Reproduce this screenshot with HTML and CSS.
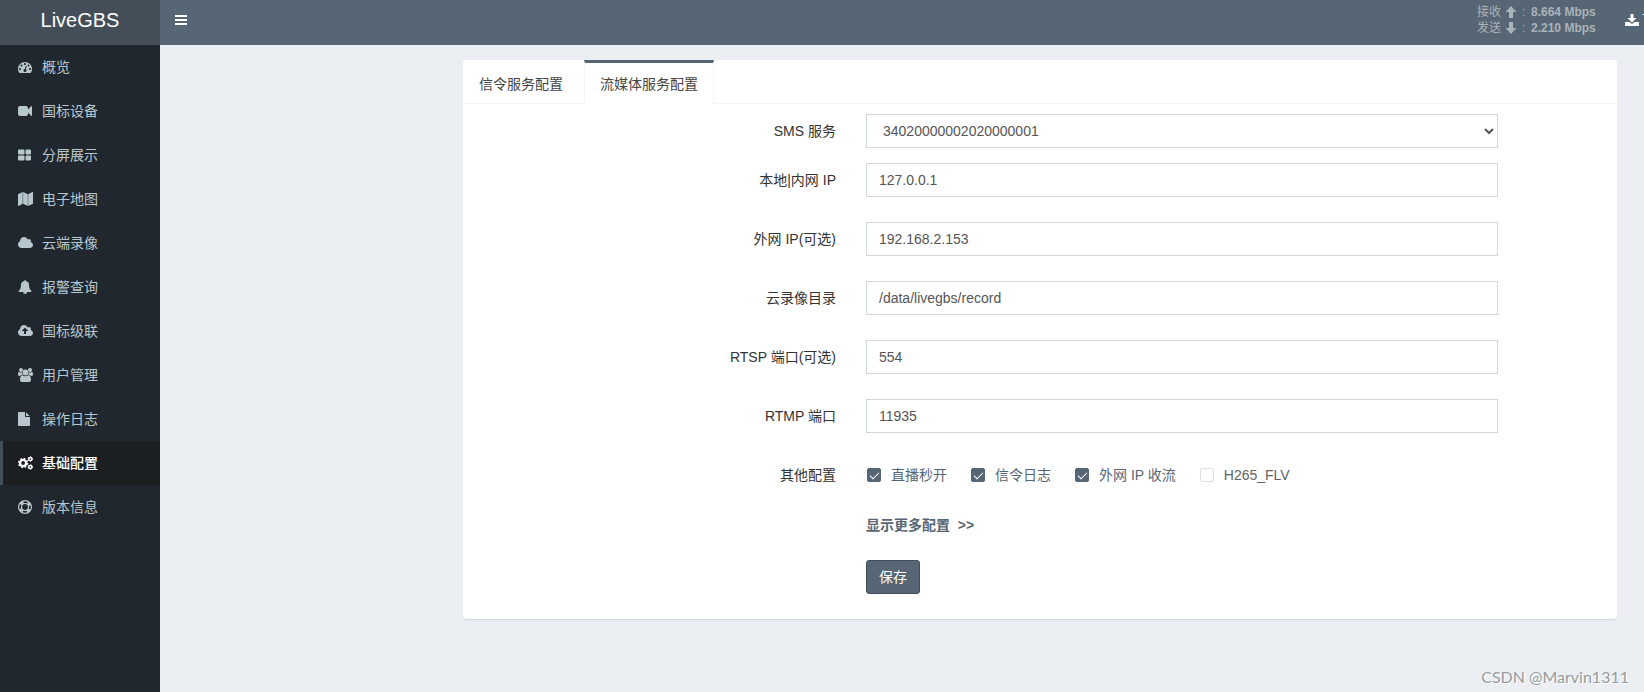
FILE: index.html
```html
<!DOCTYPE html>
<html lang="zh-CN">
<head>
<meta charset="utf-8">
<title>LiveGBS</title>
<link rel="stylesheet" href="styles.css">
</head>
<body>
<div class="app">
  <header class="header">
    <a class="logo" href="#">LiveGBS</a>
    <nav class="navbar">
      <button class="toggle" type="button" aria-label="菜单">
        <svg viewBox="0 0 12 14" width="12" height="14"><path d="M0 2h12v2H0zM0 6h12v2H0zM0 10h12v2H0z"/></svg>
      </button>
      <div class="nav-right">
        <div class="traffic">
          <div class="rate"><span>接收</span><svg viewBox="0 0 12 12" width="12" height="12"><path d="M6 0l5.500 6H8v6H4V6H.5z"/></svg><span class="colon">:</span><b>8.664 Mbps</b></div>
          <div class="rate"><span>发送</span><svg viewBox="0 0 12 12" width="12" height="12"><path d="M6 12l5.500-6H8V0H4v6H.5z"/></svg><span class="colon">:</span><b>2.210 Mbps</b></div>
        </div>
        <a class="download" href="#"><svg viewBox="0 0 14 14" width="14" height="14"><path d="M5.500 1h3v4h3L7 9.500 2.500 5h3zM0 9h4.500L7 11l2.500-2H14v4H0z"/></svg>下载</a>
      </div>
    </nav>
  </header>
  <div class="body">
    <aside class="sidebar">
      <a class="item" href="#"><svg viewBox="0 0 1792 1792" width="14" height="14"><path d="M384 1152q0-53-37.5-90.5t-90.5-37.5-90.5 37.5-37.5 90.5 37.5 90.5 90.5 37.5 90.5-37.5 37.5-90.5zm192-448q0-53-37.5-90.5t-90.5-37.5-90.5 37.5-37.5 90.5 37.5 90.5 90.5 37.5 90.5-37.5 37.5-90.5zm428 481l101-382q6-26-7.5-48.5t-38.5-29.5-48 6.5-30 39.5l-101 382q-60 5-107 43.5t-63 98.5q-20 77 20 146t117 89 146-20 89-117q16-60-6-117t-72-91zm660-33q0-53-37.5-90.5t-90.5-37.5-90.5 37.5-37.5 90.5 37.5 90.5 90.5 37.5 90.5-37.5 37.5-90.5zm-640-640q0-53-37.5-90.5t-90.5-37.5-90.5 37.5-37.5 90.5 37.5 90.5 90.5 37.5 90.5-37.5 37.5-90.5zm448 192q0-53-37.5-90.5t-90.5-37.5-90.5 37.5-37.5 90.5 37.5 90.5 90.5 37.5 90.5-37.5 37.5-90.5zm320 448q0 261-141 483-19 29-54 29h-1402q-35 0-54-29-141-221-141-483 0-182 71-348t191-286 286-191 348-71 348 71 286 191 191 286 71 348z"/></svg><span>概览</span></a>
      <a class="item" href="#"><svg viewBox="0 0 14 14" width="14" height="14"><path d="M2 2h6q2 0 2 2v1.500L13.200 2.200Q14 1.600 14 2.500v9q0 .9-.8.3L10 8.500V10q0 2-2 2H2q-2 0-2-2V4q0-2 2-2z"/></svg><span>国标设备</span></a>
      <a class="item" href="#"><svg viewBox="0 0 14 14" width="14" height="14"><path d="M1 1.500h4.500q1 0 1 1v3q0 1-1 1H1q-1 0-1-1v-3q0-1 1-1zm7.500 0H12q1 0 1 1v3q0 1-1 1H8.500q-1 0-1-1v-3q0-1 1-1zM1 7.500h4.500q1 0 1 1v3q0 1-1 1H1q-1 0-1-1v-3q0-1 1-1zm7.500 0H12q1 0 1 1v3q0 1-1 1H8.500q-1 0-1-1v-3q0-1 1-1z"/></svg><span>分屏展示</span></a>
      <a class="item" href="#"><svg viewBox="0 0 15 14" width="15" height="14"><path d="M0 2.200L4.700 0v11.800L.6 13.900Q0 14.100 0 13.500zM5.100 0l4.700 2.200V14L5.100 11.800zM10.200 2.200L14.300.1Q15-.1 15 .6v11.200L10.200 14z"/></svg><span>电子地图</span></a>
      <a class="item" href="#"><svg viewBox="64 0 1920 1792" width="15" height="14"><path d="M1984 1152q0 159-112.500 271.500t-271.500 112.500h-1088q-185 0-316.500-131.500t-131.500-316.500q0-132 71-241.500t187-163.500q-2-28-2-43 0-212 150-362t362-150q158 0 286.500 88t187.500 230q70-62 166-62 106 0 181 75t75 181q0 75-41 138 129 30 213 134.500t84 239.500z"/></svg><span>云端录像</span></a>
      <a class="item" href="#"><svg viewBox="0 0 1792 1792" width="14" height="14"><path d="M912 1696q0-16-16-16-59 0-101.500-42.500t-42.500-101.500q0-16-16-16t-16 16q0 73 51.500 124.500t124.500 51.500q16 0 16-16zm816-288q0 52-38 90t-90 38h-448q0 106-75 181t-181 75-181-75-75-181h-448q-52 0-90-38t-38-90q50-42 91-88t85-119.500 74.500-158.500 50-206 19.500-260q0-152 117-282.500t307-158.500q-8-19-8-39 0-40 28-68t68-28 68 28 28 68q0 20-8 39 190 28 307 158.500t117 282.500q0 139 19.500 260t50 206 74.500 158.500 85 119.500 91 88z"/></svg><span>报警查询</span></a>
      <a class="item" href="#"><svg viewBox="64 0 1920 1792" width="15" height="14"><path d="M1344 864q0-14-9-23l-352-352q-9-9-23-9t-23 9l-351 351q-10 12-10 24 0 14 9 23t23 9h224v352q0 13 9.500 22.500t22.500 9.500h192q13 0 22.500-9.500t9.500-22.500v-352h224q13 0 22.500-9.500t9.500-22.500zm640 288q0 159-112.500 271.500t-271.500 112.500h-1088q-185 0-316.500-131.500t-131.500-316.500q0-132 71-241.500t187-163.500q-2-28-2-43 0-212 150-362t362-150q158 0 286.500 88t187.500 230q70-62 166-62 106 0 181 75t75 181q0 75-41 138 129 30 213 134.500t84 239.500z"/></svg><span>国标级联</span></a>
      <a class="item" href="#"><svg viewBox="0 0 15 14" width="15" height="14"><circle cx="3" cy="2" r="2"/><circle cx="12" cy="2" r="2"/><circle cx="7.500" cy="4.500" r="2.900"/><path d="M3.800 7Q2.600 7 2 8H1.500Q0 8 0 6.500 0 3.700 1 3.700q2 1.300 3.100.6-.2 1.600.7 2.700zM11.200 7q1.200 0 1.800 1h.5Q15 8 15 6.500q0-2.800-1-2.800-2 1.300-3.100.6.2 1.600-.7 2.700zM4.500 7.200Q7.500 9.400 10.500 7.200q2.500.2 2.500 4.600 0 2.200-2 2.200H4q-2 0-2-2.200 0-4.400 2.500-4.600z"/></svg><span>用户管理</span></a>
      <a class="item" href="#"><svg viewBox="128 0 1792 1792" width="14" height="14"><path d="M1152 512v-472q22 14 36 28l408 408q14 14 28 36h-472zm-128 32q0 40 28 68t68 28h544v1056q0 40-28 68t-68 28h-1344q-40 0-68-28t-28-68v-1600q0-40 28-68t68-28h800v544z"/></svg><span>操作日志</span></a>
      <a class="item active" href="#"><svg viewBox="0 0 15 14" width="15" height="14"><g fill="none" stroke="currentColor"><circle cx="5.100" cy="7" r="3.100" stroke-width="2.400"/><circle cx="5.100" cy="7" r="4.600" stroke-width="1.200" stroke-dasharray="1.800 1.813"/><circle cx="12.300" cy="3" r="1.600" stroke-width="1.500"/><circle cx="12.300" cy="3" r="2.400" stroke-width=".8" stroke-dasharray="1.200 1.313"/><circle cx="12.300" cy="11" r="1.600" stroke-width="1.500"/><circle cx="12.300" cy="11" r="2.400" stroke-width=".8" stroke-dasharray="1.200 1.313"/></g></svg><span>基础配置</span></a>
      <a class="item" href="#"><svg viewBox="0 0 14 14" width="14" height="14"><g fill="none" stroke="currentColor"><circle cx="7" cy="7" r="6.400" stroke-width="1.200"/><circle cx="7" cy="7" r="3.500" stroke-width="1.200"/><circle cx="7" cy="7" r="5" stroke-width="3" stroke-dasharray="3.600 4.254" stroke-dashoffset="-2.127"/></g></svg><span>版本信息</span></a>
    </aside>
    <main class="content">
      <section class="card">
        <nav class="tabs">
          <a class="tab" href="#">信令服务配置</a>
          <a class="tab selected" href="#">流媒体服务配置</a>
        </nav>
        <form class="form">
          <div class="row tight"><label for="sms">SMS 服务</label><div class="field"><select id="sms" class="control"><option>34020000002020000001</option></select></div></div>
          <div class="row"><label for="lan">本地|内网 IP</label><div class="field"><input id="lan" class="control" type="text" value="127.0.0.1"></div></div>
          <div class="row"><label for="wan">外网 IP(可选)</label><div class="field"><input id="wan" class="control" type="text" value="192.168.2.153"></div></div>
          <div class="row"><label for="dir">云录像目录</label><div class="field"><input id="dir" class="control" type="text" value="/data/livegbs/record"></div></div>
          <div class="row"><label for="rtsp">RTSP 端口(可选)</label><div class="field"><input id="rtsp" class="control" type="text" value="554"></div></div>
          <div class="row"><label for="rtmp">RTMP 端口</label><div class="field"><input id="rtmp" class="control" type="text" value="11935"></div></div>
          <div class="row check-row"><span class="caption">其他配置</span><div class="field checks">
            <label class="check"><input type="checkbox" checked>直播秒开</label>
            <label class="check"><input type="checkbox" checked>信令日志</label>
            <label class="check"><input type="checkbox" checked>外网 IP 收流</label>
            <label class="check plain"><input type="checkbox">H265_FLV</label>
          </div></div>
          <div class="row more-row"><div class="field offset"><a class="more" href="#">显示更多配置&nbsp; &gt;&gt;</a></div></div>
          <div class="row last"><div class="field offset"><button class="save" type="button">保存</button></div></div>
        </form>
      </section>
      <div class="watermark">CSDN @Marvin1311</div>
    </main>
  </div>
</div>
</body>
</html>
```
FILE: styles.css
```css
* { box-sizing: border-box; }
body {
  margin: 0;
  font: 14px/20px "Liberation Sans", "Noto Sans CJK SC", sans-serif;
  color: #333;
  background: #ebeff4;
}
a { text-decoration: none; color: inherit; }
svg { fill: currentColor; flex: none; display: block; }
.app { min-height: 100vh; display: flex; flex-direction: column; overflow: hidden; }

.header { display: flex; height: 45px; color: #fff; background: #566675; }
.logo { width: 160px; flex: none; background: #434e59; font-size: 20px; line-height: 40px; text-align: center; }
.navbar { flex: 1; min-width: 0; display: flex; justify-content: space-between; }
.toggle { border: 0; background: none; color: #fff; padding: 0 15px; height: 40px; }
.nav-right { display: flex; width: 167px; }
.traffic { flex: none; width: 148px; padding-top: 4px; font-size: 12px; line-height: 16px; color: #abb3ba; }
.rate { display: flex; align-items: center; height: 16px; }
.rate svg { margin-left: 4px; }
.colon { width: 14px; padding-left: 5px; }
.download { flex: none; display: flex; align-items: center; gap: 3px; height: 40px; white-space: nowrap; }

.body { flex: 1; display: flex; }
.sidebar { width: 160px; flex: none; background: #21272e; color: #b8c7ce; }
.item { display: flex; align-items: center; height: 44px; padding-left: 15px; border-left: 3px solid transparent; }
.item span { margin-left: 9px; }
.item svg[width="14"] + span { margin-left: 10px; }
.item.active { color: #fff; background: #1c1f22; border-left-color: #434e59; font-weight: 500; }

.content { flex: 1; min-width: 0; display: flex; flex-direction: column; justify-content: space-between; padding: 15px 15px 4px 303px; }
.card { margin-right: 12px; background: #fff; border-radius: 3px; box-shadow: 0 1px 1px rgba(0, 0, 0, .1); }
.tabs { display: flex; height: 44px; border-bottom: 1px solid #f4f4f4; color: #444; }
.tab { height: 44px; padding: 11px 15px 9px; border: 0 solid transparent; border-width: 0 1px; line-height: 26px; }
.tab.selected { margin-left: 5px; padding-top: 8px; background: #fff; border-top: 3px solid #566675; border-left-color: #f4f4f4; border-right-color: #f4f4f4; }
.form { padding: 10px 10px 25px; }
.row { display: grid; grid-template-columns: 4fr 7fr 1fr; align-items: center; min-height: 34px; margin-bottom: 25px; }
.row.tight { margin-bottom: 15px; }
.row.check-row { margin-bottom: 16px; }
.row.more-row { margin-bottom: 18px; }
.row.last { margin-bottom: 0; }
.row > label, .caption { text-align: right; padding-right: 15px; }
.field { padding: 0 15px; }
.offset { grid-column: 2; }
.control { display: block; width: 100%; height: 34px; padding: 6px 12px; border: 1px solid #d2d6de; border-radius: 0; background: #fff; color: #555; font: inherit; }
.checks { display: flex; gap: 24px; }
.check { display: flex; align-items: center; gap: 10px; color: #566675; }
.check.plain { color: #606266; }
.check input { appearance: none; width: 14px; height: 14px; margin: 0 0 0 1px; border: 1px solid #dcdfe6; border-radius: 2px; background: #fff; display: grid; place-items: center; }
.check + .check input { margin-left: 0; }
.check input:checked { background: #566675; border-color: #566675; }
.check input:checked::after { content: ""; width: 4px; height: 8px; margin-bottom: 2px; border: solid #fff; border-width: 0 1px 1px 0; transform: rotate(45deg); }
.more { color: #566675; font-weight: 700; }
.save { display: block; height: 34px; padding: 0 12px; border: 1px solid #434e59; border-radius: 3px; background: #566675; color: #fff; font: inherit; }
.watermark { align-self: flex-end; font: 16px/22px Lato, sans-serif; color: #999b9f; text-shadow: 1px 1px 0 #fff; }
```
